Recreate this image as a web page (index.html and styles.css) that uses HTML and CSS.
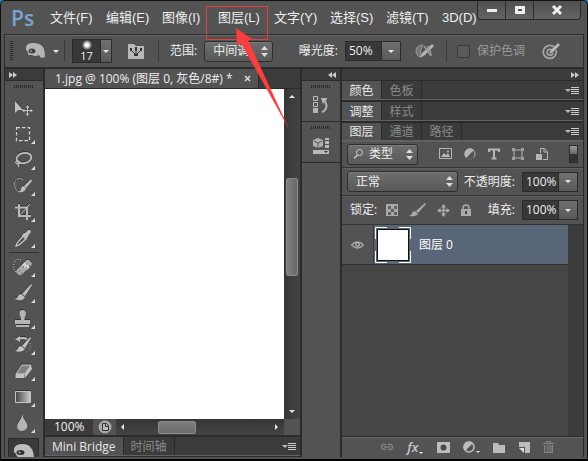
FILE: index.html
```html
<!DOCTYPE html>
<html lang="zh-CN">
  <head>
    <meta charset="utf-8" />
    <title>Ps</title>
    <link rel="stylesheet" href="styles.css" />
  </head>
  <body>
    <div class="app">
      <header class="menubar">
        <div class="logo">Ps</div>
        <nav class="menu">
          <button>文件(F)</button>
          <button>编辑(E)</button>
          <button>图像(I)</button>
          <button class="marked">图层(L)</button>
          <button>文字(Y)</button>
          <button>选择(S)</button>
          <button>滤镜(T)</button>
          <button>3D(D)</button>
        </nav>
        <div class="window-buttons">
          <button aria-label="最小化">
            <svg width="12" height="12"><path d="M1 5h10v3H1z" fill="#eee" /></svg>
          </button>
          <button aria-label="最大化">
            <svg width="12" height="12"><path d="M2.500 3.500h7v5h-7z" fill="none" stroke="#eee" stroke-width="3" /></svg>
          </button>
          <button class="close" aria-label="关闭">
            <svg width="12" height="12"><path d="M2 2l8 8M10 2l-8 8" stroke="#eee" stroke-width="3" /></svg>
          </button>
        </div>
      </header>

      <div class="options">
        <span class="grip-v"></span>
        <button class="tool-preset" aria-label="工具预设">
          <svg width="20" height="18" viewBox="0 0 20 18">
            <path d="M0 5Q1 1 7 1T16 4Q19 7 19 15L15 16L13 13Q9 15 6 13H3Q1 12 2 10L0 8z" fill="#b5b5b5" />
            <ellipse cx="6" cy="9" rx="3.500" ry="2.500" fill="#444" />
            <circle cx="5" cy="9" r="1" fill="#999" />
          </svg>
          <span class="caret"></span>
        </button>
        <span class="sep"></span>
        <button class="brush-size" aria-label="画笔大小">
          <span class="brush-preview"><i class="dot"></i>17</span>
          <span class="drop"><span class="caret"></span></span>
        </button>
        <button class="brush-panel" aria-label="画笔面板">
          <svg width="18" height="18" viewBox="0 0 18 18">
            <path d="M1 2h6l2 2h8v13H1z" fill="#b8b8b8" />
            <path d="M4 8l4 4M9 7v6M14 8l-4 4" stroke="#333" />
            <path d="M3 6h2v3H3zM8 5h2v4H8zM13 6h2v3h-2zM7 12h4v2H7z" fill="#333" />
          </svg>
        </button>
        <span class="sep"></span>
        <label class="opt-range">范围:
          <span class="select range"><select><option>中间调</option></select><svg class="updown" width="7" height="11"><path d="M0 4l3.500-4L7 4zM0 7h7l-3.500 4z" /></svg></span>
        </label>
        <label class="opt-exposure">曝光度:
          <span class="field"><input type="text" value="50%" /><span class="drop"><span class="caret"></span></span></span>
        </label>
        <button class="airbrush" aria-label="喷枪">
          <svg width="20" height="16" viewBox="0 0 20 16">
            <path d="M7 2Q1 3 1 8T6 14Q4 8 8 2z" fill="#777" stroke="#999" />
            <path d="M5 15l2-5L17 1l2 2-9 9z" fill="#b5b5b5" />
            <path d="M9 3l7 10M12 3q4 4 4 10" fill="none" stroke="#999" stroke-width="1.500" />
          </svg>
        </button>
        <span class="sep"></span>
        <label class="protect"><input type="checkbox" />保护色调</label>
        <button class="pressure" aria-label="压力">
          <svg width="19" height="18" viewBox="0 0 19 18">
            <path d="M12 5A6.500 6.500 0 1 0 14 8M10 8a3 3 0 1 0 1 3" fill="none" stroke="#a5a5a5" stroke-width="1.700" />
            <path d="M7 12l2-4 7-7 2 2-7 7z" fill="#bbb" />
          </svg>
        </button>
      </div>

      <main class="workspace">
        <aside class="tools">
          <div class="dock-head"><svg width="8" height="6"><path d="M0 0l4 3-4 3zM4 0l4 3-4 3z" /></svg></div>
          <span class="grip-h"></span>
          <button class="tool plain" aria-label="移动">
            <svg viewBox="0 0 20 20">
              <path d="M2 3v12l3-3 5 0z" fill="#c2c2c2" />
              <path d="M14.500 8v9M10 12.500h9" stroke="#c2c2c2" />
              <path d="M12.500 9.500l2-2.500 2 2.500zM12.500 15.500l2 2.500 2-2.500zM11.500 10.500L9 12.500l2.500 2zM17.500 10.500l2.500 2-2.500 2z" fill="#c2c2c2" />
            </svg>
          </button>
          <button class="tool" aria-label="矩形选框">
            <svg viewBox="0 0 20 20"><path d="M3.500 3.500h13v13h-13z" fill="none" stroke="#d0d0d0" stroke-width="1.300" stroke-dasharray="3.500 2" /></svg>
          </button>
          <button class="tool" aria-label="套索">
            <svg viewBox="0 0 20 20">
              <ellipse cx="11" cy="8" rx="7.500" ry="5" transform="rotate(-12 11 8)" fill="none" stroke="#bdbdbd" stroke-width="1.800" />
              <path d="M5 11q-3 0-2 2t3 0-1-2M4 13q3 1 1 4" fill="none" stroke="#bdbdbd" stroke-width="1.200" />
            </svg>
          </button>
          <button class="tool" aria-label="快速选择">
            <svg viewBox="0 0 20 20">
              <path d="M10 4Q6 1 3 4T3 13q2 4 6 2" fill="none" stroke="#ccc" stroke-dasharray="1.500 1" />
              <path d="M18 3l1 2-6 7-2-2zM10 10l3 2q-1 5-8 4 3-1 3-3 0-2 2-3z" fill="#bebebe" />
            </svg>
          </button>
          <button class="tool" aria-label="裁剪">
            <svg viewBox="0 0 20 20"><path d="M6 2v12h12M2 5.500h12V18" fill="none" stroke="#b8b8b8" stroke-width="2" /><path d="M6 14L17 2" stroke="#c5c5c5" /></svg>
          </button>
          <button class="tool" aria-label="吸管">
            <svg viewBox="0 0 20 20">
              <path d="M10 8l3 3-7 6-3 1 1-3z" fill="#555" stroke="#ccc" stroke-width="1.200" />
              <path d="M9 7l2-2 1 0 3-3q3-1 3 2l-3 4v1l-2 2z" fill="#bbb" />
            </svg>
          </button>
          <span class="tool-line"></span>
          <button class="tool" aria-label="修复画笔">
            <svg viewBox="0 0 20 20">
              <path d="M8 3Q4 1 2 4T1 12q1 3 3 3" fill="none" stroke="#ddd" stroke-dasharray="1 1.500" />
              <rect x="2" y="7" width="18" height="7" rx="3" transform="rotate(-44 11 10.500)" fill="#aaa" />
              <path d="M9 8l5 5 3-3-5-5z" fill="#d0d0d0" />
              <path d="M10 10h1M13 7h1M13 11h1M16 9h1M6 14h1M8 16h1M17 4h1" stroke="#555" />
            </svg>
          </button>
          <button class="tool" aria-label="画笔">
            <svg viewBox="0 0 20 20"><path d="M18 1l1 1-7 11-3-2zM8 11l4 3q-2 5-11 2 3 0 4-3 1-2 3-2z" fill="#bdbdbd" /></svg>
          </button>
          <button class="tool" aria-label="仿制图章">
            <svg viewBox="0 0 20 20"><path d="M8 9L6.500 5Q6 1 9.500 1T13 5l-1.500 4v2H17v4H2v-4h6zM3 16h13v2H3z" fill="#b5b5b5" /></svg>
          </button>
          <button class="tool" aria-label="历史记录画笔">
            <svg viewBox="0 0 20 20">
              <path d="M5 4q5-2 9 0" fill="none" stroke="#bbb" stroke-width="2" /><path d="M2 4l5-3v6z" fill="#bbb" />
              <path d="M17 2l1 1-6 10-3-2zM8 11l4 3q-3 4-10 2 3-1 3-3 1-2 3-2z" fill="#c2c2c2" />
              <path d="M17 8q2 6-4 9" fill="none" stroke="#bbb" stroke-dasharray="1 1.500" />
            </svg>
          </button>
          <button class="tool" aria-label="橡皮擦">
            <svg viewBox="0 0 20 20">
              <path d="M3 13L9 4h9l-6 9z" fill="#808080" stroke="#ccc" />
              <path d="M2.500 13h9v4h-9zM12 13l6-9 1 4-7 9z" fill="#c2c2c2" />
            </svg>
          </button>
          <button class="tool" aria-label="渐变">
            <svg viewBox="0 0 20 20">
              <defs><linearGradient id="grad"><stop offset="0" stop-color="#444" /><stop offset="1" stop-color="#ccc" /></linearGradient></defs>
              <path d="M2.500 4.500h15v11h-15z" fill="url(#grad)" stroke="#c2c2c2" />
            </svg>
          </button>
          <button class="tool" aria-label="模糊">
            <svg viewBox="0 0 20 20"><path d="M9.500 1q0 4 3.500 8 2 3 1 6-2 3-5 3-4 0-5-4 0-3 3-7 2-3 2.500-6z" fill="#b5b5b5" /></svg>
          </button>
          <button class="tool active" aria-label="减淡">
            <svg viewBox="0 0 20 20">
              <path d="M0 8Q1 3 8 3T17 7Q20 10 20 18L16 19L14 16Q10 18 7 16H4Q2 15 2 13L0 11z" fill="#bdbdbd" />
              <ellipse cx="6.500" cy="11.500" rx="4" ry="2.500" fill="#2e2e2e" />
              <circle cx="5.500" cy="11.500" r="1" fill="#bbb" />
            </svg>
          </button>
        </aside>

        <section class="document">
          <div class="doc-tabs">
            <div class="doc-tab">
              <span>1.jpg @ 100% (图层 0, 灰色/8#) *</span>
              <button aria-label="关闭文档"><svg width="7" height="7"><path d="M1 1l5 5M6 1L1 6" stroke="#ddd" stroke-width="1.500" /></svg></button>
            </div>
          </div>
          <div class="view">
            <div class="canvas"></div>
            <div class="scroll-v">
              <span class="caret up"></span>
              <span class="thumb"></span>
              <span class="caret"></span>
            </div>
          </div>
          <div class="status">
            <input type="text" value="100%" aria-label="缩放" />
            <button class="doc-info" aria-label="文档信息">
              <svg width="14" height="14"><circle cx="7" cy="7" r="6.500" fill="#aaa" /><path d="M4.500 3.500h4l2 2v5h-6zM7.500 3.500v3h3" fill="#bbb" stroke="#333" /></svg>
            </button>
            <div class="scroll-h">
              <span class="caret left"></span>
              <span class="thumb"></span>
              <span class="caret right"></span>
            </div>
          </div>
          <div class="tabs bottom-tabs">
            <button class="on">Mini Bridge</button>
            <button>时间轴</button>
            <span class="panel-menu"><i class="caret"></i><i class="lines"></i></span>
          </div>
        </section>

        <aside class="strip">
          <div class="dock-head right"><svg width="8" height="6"><path d="M4 0L0 3l4 3zM8 0L4 3l4 3z" /></svg></div>
          <div class="strip-group">
            <span class="grip-h"></span>
            <button aria-label="历史记录">
              <svg width="16" height="18" viewBox="0 0 16 18">
                <path d="M.5.500h4v4h-4zM.5 6.500h4v4h-4z" fill="none" stroke="#bbb" /><path d="M0 12h5v5H0z" fill="#b5b5b5" />
                <path d="M9 16q7-3 3-11" fill="none" stroke="#b5b5b5" stroke-width="2" /><path d="M8 2h6v1l-4 5z" fill="#b5b5b5" />
              </svg>
            </button>
          </div>
          <div class="strip-group">
            <span class="grip-h"></span>
            <button aria-label="属性">
              <svg width="16" height="18" viewBox="0 0 16 18">
                <path d="M0 3l5-2 5 2v6l-5 2-5-2z" fill="#b0b0b0" /><path d="M1 4l4 2 4-2M5 6v5" fill="none" stroke="#555" />
                <path d="M12 1h4v2h-4zM12 4h4v3h-4zM12 8h4v3h-4zM0 13h16v4H0z" fill="#b8b8b8" /><path d="M11 14h4l-2 2z" fill="#333" />
              </svg>
            </button>
          </div>
        </aside>

        <aside class="panels">
          <div class="dock-head right"><svg width="8" height="6"><path d="M0 0l4 3-4 3zM4 0l4 3-4 3z" /></svg></div>
          <div class="tabs">
            <button class="on">颜色</button><button>色板</button>
            <span class="panel-menu"><i class="caret"></i><i class="lines"></i></span>
          </div>
          <div class="tabs">
            <button class="on">调整</button><button>样式</button>
            <span class="panel-menu"><i class="caret"></i><i class="lines"></i></span>
          </div>
          <div class="layers">
            <div class="tabs">
              <button class="on">图层</button><button>通道</button><button>路径</button>
              <span class="panel-menu"><i class="caret"></i><i class="lines"></i></span>
            </div>
            <div class="row filter">
              <span class="select kind">
                <svg class="search" width="9" height="10"><circle cx="5.500" cy="3.500" r="3" fill="none" stroke="#ccc" /><path d="M3.500 6L0 9.500" stroke="#ccc" stroke-width="1.500" /></svg>
                <select aria-label="滤镜类型"><option>类型</option></select>
                <svg class="updown" width="7" height="11"><path d="M0 4l3.500-4L7 4zM0 7h7l-3.500 4z" /></svg>
              </span>
              <div class="filter-icons">
                <button aria-label="像素图层"><svg width="13" height="12"><path d="M.5.500h12v10H.5z" fill="none" stroke="#b5b5b5" /><path d="M2 9l3-4 2 2 2-2 2 4z" fill="#b5b5b5" /><circle cx="9" cy="3.500" r="1" fill="#b5b5b5" /></svg></button>
                <button aria-label="调整图层"><svg width="12" height="12"><circle cx="6" cy="6" r="5" fill="none" stroke="#b5b5b5" /><path d="M2 10A5.500 5.500 0 0 1 2 2L10 10A5.500 5.500 0 0 1 2 10z" fill="#555" /><path d="M2 10A5.500 5.500 0 0 1 10 2z" fill="#b5b5b5" /></svg></button>
                <button aria-label="文字图层"><svg width="12" height="12"><path d="M1 4V1.500h10V4M6 1v9M3.500 10.500h5" fill="none" stroke="#b5b5b5" stroke-width="2" /></svg></button>
                <button aria-label="形状图层"><svg width="12" height="12"><path d="M2 2h8v8H2z" fill="none" stroke="#b5b5b5" /><path d="M.5.500h2v2h-2zM9.500.500h2v2h-2zM.5 9.500h2v2h-2zM9.500 9.500h2v2h-2z" fill="#535353" stroke="#b5b5b5" /></svg></button>
                <button aria-label="智能对象"><svg width="12" height="13"><path d="M4.500 5V.5h4l3 3v8H7M8 1v3h3" fill="none" stroke="#b5b5b5" /><path d="M0 6h6v6H0z" fill="#b5b5b5" /></svg></button>
              </div>
              <button class="switch" aria-label="滤镜开关"></button>
            </div>
            <div class="row">
              <span class="select blend"><select aria-label="混合模式"><option>正常</option></select><svg class="updown" width="7" height="11"><path d="M0 4l3.500-4L7 4zM0 7h7l-3.500 4z" /></svg></span>
              <label class="value">不透明度:
                <span class="field"><input type="text" value="100%" /><span class="drop"><span class="caret"></span></span></span>
              </label>
            </div>
            <div class="row lock">
              <span>锁定:</span>
              <div class="lock-icons">
                <button aria-label="锁定透明像素"><svg width="12" height="12"><path d="M0 0h12v12H0z" fill="#aaa" /><path d="M2 2h3v3H2zM8 2h3v3H8zM5 5h3v3H5zM2 8h3v3H2zM8 8h3v3H8z" fill="#606060" /></svg></button>
                <button aria-label="锁定图像像素"><svg width="17" height="14"><path d="M16 0l1 1-8 9-2-2zM6 8l3 3q-2 3-9 2 3-1 3-3 1-2 3-2z" fill="#aaa" /></svg></button>
                <button aria-label="锁定位置"><svg width="13" height="13"><path d="M6.500 1v11M1 6.500h11" stroke="#aaa" stroke-width="1.500" /><path d="M4 3.500L6.500 0 9 3.500zM4 9.500L6.500 13 9 9.500zM3.500 4L0 6.500 3.500 9zM9.500 4L13 6.500 9.500 9z" fill="#aaa" /></svg></button>
                <button aria-label="锁定全部"><svg width="10" height="13"><path d="M2 6V4q0-3 3-3t3 3v2" fill="none" stroke="#aaa" stroke-width="1.500" /><path d="M0 5h10v7H0z" fill="#aaa" /><path d="M4 7h2v3H4z" fill="#444" /></svg></button>
              </div>
              <label class="value">填充:
                <span class="field"><input type="text" value="100%" /><span class="drop"><span class="caret"></span></span></span>
              </label>
            </div>
            <div class="layer-list">
              <div class="layer">
                <button class="eye" aria-label="可见性">
                  <svg width="13" height="10"><path d="M.5 5Q6.500-1 12.500 5Q6.500 11 .5 5z" fill="none" stroke="#aaa" stroke-width="1.300" /><circle cx="6.500" cy="4.500" r="2.500" fill="#aaa" /><circle cx="6.500" cy="4.500" r="1" fill="#444" /></svg>
                </button>
                <div class="layer-body">
                  <svg class="thumbnail" width="36" height="36"><path d="M.5 12V.5H12M24 .5h11.500V12M35.500 24v11.500H24M12 35.500H.5V24" fill="none" stroke="#fff" /><path d="M2.500 2.500h31v31h-31z" fill="#fff" stroke="#111" /></svg>
                  <span>图层 0</span>
                </div>
              </div>
            </div>
            <div class="layer-footer">
              <button aria-label="链接图层"><svg width="14" height="8"><path d="M6 1.500H4a2.500 2.500 0 0 0 0 5h2M8 1.500h2a2.500 2.500 0 0 1 0 5H8M4 4h6" fill="none" stroke="#808080" stroke-width="1.500" /></svg></button>
              <button class="fx" aria-label="图层样式"><em>fx</em><i class="caret"></i></button>
              <button aria-label="添加蒙版"><svg width="13" height="11"><path d="M0 0h13v11H0z" fill="#bdbdbd" /><circle cx="6.500" cy="5.500" r="3" fill="#4a4a4a" /></svg></button>
              <button class="fx" aria-label="新建调整图层"><svg width="12" height="12"><circle cx="6" cy="6" r="5" fill="none" stroke="#bdbdbd" stroke-width="1.500" /><path d="M2 10A5.500 5.500 0 0 1 10 2z" fill="#bdbdbd" /></svg><i class="caret"></i></button>
              <button aria-label="新建组"><svg width="12" height="11"><path d="M0 1h5l1 2h6v8H0z" fill="#bdbdbd" /></svg></button>
              <button aria-label="新建图层"><svg width="11" height="11"><path d="M0 0h11v11H6V5H0z" fill="#bdbdbd" /><path d="M0 6h5v5z" fill="#ddd" /></svg></button>
              <button aria-label="删除图层"><svg width="11" height="12"><path d="M0 2.500h11M3.500 2V.5h4V2" fill="none" stroke="#858585" /><path d="M1.500 4v7.500h8V4M4 4v7M6 4v7M8 4v7" fill="none" stroke="#858585" /></svg></button>
            </div>
          </div>
        </aside>
      </main>

      <svg class="pointer" width="56" height="104" aria-hidden="true"><path d="M1 0l16 11-4 1 42 91-49-88-4 2z" fill="#ff3b3b" /></svg>
    </div>
  </body>
</html>
```
FILE: styles.css
```css
* {
  box-sizing: border-box;
}
body {
  margin: 0;
  background: linear-gradient(#1b82d6 6px, #000 6px);
  font-family: "Open Sans", "Noto Sans CJK SC", sans-serif;
  font-size: 12px;
  line-height: 16px;
  color: #eee;
}
button,
input,
select {
  margin: 0;
  padding: 0;
  border: none;
  background: none;
  font: inherit;
  color: inherit;
}
svg {
  display: block;
  flex: none;
}
.app {
  position: relative;
  display: flex;
  flex-direction: column;
  height: 100vh;
  padding: 0 3px 2px;
  border: 1px solid #111;
  border-bottom: 2px solid #000;
  border-radius: 5px 5px 0 0;
  background: #535353;
  overflow: hidden;
}

/* menu bar */
.menubar {
  position: relative;
  display: flex;
  height: 33px;
  flex: none;
  align-items: center;
}
.logo {
  width: 46px;
  padding-left: 7px;
  font-family: "Open Sans", sans-serif;
  font-size: 21px;
  line-height: 28px;
  font-weight: 600;
  color: #79a3d3;
}
.menu {
  display: grid;
  grid-auto-flow: column;
  grid-auto-columns: 56px;
}
.menu button {
  text-align: left;
  font-size: 13px;
  font-family: "Liberation Sans", "Noto Sans CJK SC", sans-serif;
  white-space: nowrap;
}
.menu .marked {
  position: relative;
}
.menu .marked::before {
  content: "";
  position: absolute;
  left: -12px;
  top: -4px;
  width: 60px;
  height: 32px;
  border: 1px solid #e83c3c;
}
.window-buttons {
  position: absolute;
  right: 3px;
  top: 0;
  display: flex;
  border: 1px solid #2a2a2a;
  border-top: none;
  border-radius: 0 0 4px 4px;
  background: linear-gradient(#505050, #636363);
}
.window-buttons button {
  display: flex;
  width: 28px;
  height: 18px;
  align-items: center;
  justify-content: center;
  border-right: 1px solid #2f2f2f;
}
.window-buttons .close {
  width: 46px;
  border-right: none;
}

/* options bar */
.options {
  display: flex;
  height: 33px;
  flex: none;
  align-items: center;
  padding: 0 5px;
  border: 1px solid #2e2e2e;
  border-bottom: none;
  box-shadow: inset 0 1px #636363;
  white-space: nowrap;
}
.grip-v {
  width: 3px;
  height: 20px;
  background: repeating-linear-gradient(#2e2e2e 0 1px, #535353 1px 2px);
}
.tool-preset {
  display: flex;
  align-items: center;
  gap: 7px;
  margin: 0 5px 0 13px;
}
.sep {
  width: 1px;
  height: 22px;
  background: #3b3b3b;
}
.caret {
  width: 0;
  height: 0;
  border: 3px solid transparent;
  border-top: 3px solid #e8e8e8;
  border-bottom: none;
}
.caret.up {
  border-top: none;
  border-bottom: 3px solid #e8e8e8;
}
.caret.left {
  border: 3px solid transparent;
  border-left: none;
  border-right-color: #e8e8e8;
}
.caret.right {
  border: 3px solid transparent;
  border-right: none;
  border-left-color: #e8e8e8;
}
.brush-size {
  display: flex;
  height: 24px;
  margin-left: 7px;
  border: 1px solid #2b2b2b;
}
.brush-preview {
  display: flex;
  flex-direction: column;
  width: 27px;
  align-items: center;
  background: #383838;
  font-size: 11px;
  line-height: 12px;
}
.dot {
  width: 10px;
  height: 10px;
  border-radius: 50%;
  background: radial-gradient(#fff 20%, #383838 75%);
}
.drop {
  display: flex;
  width: 19px;
  flex: none;
  align-items: center;
  justify-content: center;
  border-left: 1px solid #2b2b2b;
  background: linear-gradient(#707070, #595959);
}
.brush-size .drop {
  width: 11px;
}
.brush-panel {
  margin: 0 13px 0 15px;
}
.options label,
.value {
  display: flex;
  align-items: center;
  gap: 7px;
}
.opt-range {
  margin-left: 11px;
}
.opt-exposure {
  margin-left: auto;
}
.select {
  position: relative;
  display: inline-flex;
  height: 21px;
  align-items: center;
  border: 1px solid #2e2e2e;
  border-radius: 3px;
  background: linear-gradient(#6e6e6e, #585858);
  box-shadow: inset 0 1px #7c7c7c;
}
.select select {
  width: 100%;
  height: 100%;
  padding-left: 8px;
  appearance: none;
  outline: none;
}
.updown {
  position: absolute;
  right: 4px;
  fill: #ddd;
  pointer-events: none;
}
.range {
  width: 69px;
}
.kind {
  width: 71px;
}
.kind select {
  padding-left: 21px;
}
.search {
  position: absolute;
  left: 6px;
}
.blend {
  width: 111px;
}
.field {
  display: flex;
  height: 20px;
  border: 1px solid #2b2b2b;
  background: #383838;
}
.field input {
  width: 35px;
  padding-left: 3px;
  outline: none;
}
.airbrush {
  margin: 0 11px 0 14px;
}
.protect {
  margin-left: 10px;
  color: #999;
}
.protect input {
  width: 13px;
  height: 13px;
  appearance: none;
  border: 1px solid #3a3a3a;
  border-radius: 2px;
  background: #5a5a5a;
}
.pressure {
  margin: 0 17px;
}

/* workspace */
.workspace {
  display: grid;
  grid-template-columns: 38px 1fr 38px 241px;
  gap: 2px;
  flex: 1;
  min-height: 0;
  padding: 2px 1px 0;
  background: #2b2b2b;
}
.workspace > * {
  display: flex;
  flex-direction: column;
  min-width: 0;
  min-height: 0;
}
.dock-head {
  display: flex;
  height: 12px;
  flex: none;
  align-items: center;
  padding: 0 4px;
  border-bottom: 1px solid #2b2b2b;
  background: #3b3b3b;
}
.dock-head.right {
  justify-content: flex-end;
}
.dock-head svg {
  fill: #ccc;
}
.grip-h {
  display: block;
  width: 20px;
  height: 3px;
  flex: none;
  margin: 4px auto 0;
  background: repeating-linear-gradient(90deg, #2e2e2e 0 1px, #535353 1px 2px);
}

/* tools */
.tools {
  overflow: hidden;
  background: #535353;
}
.tools .grip-h {
  margin-bottom: 7px;
}
.tool {
  position: relative;
  display: flex;
  height: 26px;
  flex: none;
  align-items: center;
  padding-left: 8px;
}
.tool svg {
  width: 20px;
  height: 20px;
  filter: drop-shadow(0 -1px #333);
}
.tool::after {
  content: "";
  position: absolute;
  right: 8px;
  bottom: 3px;
  border: 2px solid #ddd;
  border-top-color: transparent;
  border-left-color: transparent;
}
.tool.plain::after,
.tool.active::after {
  display: none;
}
.tool-line {
  height: 1px;
  flex: none;
  margin: 1px 4px;
  background: #333;
}
.tool.active {
  margin: 2px 4px 0 3px;
  padding-left: 5px;
  border: 1px solid #2b2b2b;
  background: #3a3a3a;
}

/* document */
.doc-tabs {
  display: flex;
  height: 20px;
  flex: none;
  border-bottom: 1px solid #2b2b2b;
  background: #3b3b3b;
}
.doc-tab {
  display: flex;
  width: 214px;
  align-items: center;
  justify-content: space-between;
  padding: 0 7px 0 10px;
  border-right: 1px solid #2b2b2b;
  background: #535353;
  white-space: nowrap;
}
.view {
  display: flex;
  flex: 1;
  min-height: 0;
}
.canvas {
  flex: 1;
  background: #fff;
}
.scroll-v {
  display: flex;
  flex-direction: column;
  width: 16px;
  align-items: center;
  justify-content: space-between;
  padding: 6px 1px;
  background: linear-gradient(90deg, #363636, #444);
}
.thumb {
  border: 1px solid #8a8a8a;
  border-radius: 2px;
  background: linear-gradient(#7d7d7d, #6c6c6c);
}
.scroll-v .thumb {
  width: 12px;
  height: 98px;
  margin-bottom: 54px;
  background: linear-gradient(90deg, #808080, #686868);
}
.status {
  display: flex;
  height: 16px;
  flex: none;
  padding-right: 16px;
  background: #535353;
}
.status input {
  width: 48px;
  padding-left: 9px;
  background: #3b3b3b;
}
.doc-info {
  display: flex;
  width: 23px;
  align-items: center;
  justify-content: center;
}
.scroll-h {
  display: flex;
  flex: 1;
  align-items: center;
  justify-content: space-between;
  padding: 0 6px 0 5px;
  background: linear-gradient(#363636, #444);
}
.scroll-h .thumb {
  width: 38px;
  height: 13px;
  margin-right: 46px;
}
.tabs {
  display: flex;
  height: 19px;
  flex: none;
  border-bottom: 1px solid #626262;
  background: #3b3b3b;
  color: #8a8a8a;
}
.tabs button {
  padding: 0 7px;
  border-right: 1px solid #2b2b2b;
  line-height: 17px;
}
.tabs .on {
  background: #535353;
  color: #e8e8e8;
}
.bottom-tabs {
  margin: 2px 0 1px;
}
.panel-menu {
  display: flex;
  align-items: center;
  margin-left: auto;
  padding-right: 4px;
}
.panel-menu .caret {
  border-top-color: #bbb;
}
.lines {
  width: 8px;
  height: 7px;
  background: repeating-linear-gradient(#ccc 0 1px, #3b3b3b 1px 2px);
}

/* icon strip */
.strip {
  background: #535353;
}
.strip-group {
  height: 41px;
  border-bottom: 1px solid #2b2b2b;
}
.strip-group button {
  display: block;
  margin: 8px auto 0;
}

/* panels */
.panels > .tabs {
  margin-bottom: 2px;
}
.layers {
  display: flex;
  flex-direction: column;
  flex: 1;
  background: #535353;
}
.layers .tabs {
  height: 18px;
}
.panels .tabs button {
  width: 40px;
}
.row {
  display: flex;
  height: 28px;
  flex: none;
  align-items: center;
  justify-content: space-between;
  padding: 0 5px;
  border-bottom: 1px solid #333;
  box-shadow: inset 0 1px #606060;
}
.row.filter {
  height: 27px;
}
.filter-icons,
.lock-icons {
  display: flex;
  align-items: center;
}
.filter-icons {
  gap: 12px;
}
.switch {
  width: 9px;
  height: 18px;
  border: 1px solid #2b2b2b;
  background: linear-gradient(#999, #666 50%, #333 50%);
}
.row.lock {
  height: 29px;
  padding-left: 8px;
}
.lock-icons {
  gap: 11px;
  margin-right: auto;
  padding-left: 9px;
}
.layer-list {
  flex: 1;
  border-bottom: 1px solid #2e2e2e;
  background: linear-gradient(90deg, #464646, #464646) no-repeat 0 0 / calc(100% - 15px) 100%, #3c3c3c;
}
.layer {
  display: flex;
  height: 40px;
  margin-right: 15px;
  border-bottom: 1px solid #333;
}
.eye {
  display: flex;
  width: 32px;
  align-items: center;
  justify-content: center;
  border-right: 1px solid #3b3b3b;
  background: #535353;
}
.layer-body {
  display: flex;
  flex: 1;
  align-items: center;
  gap: 8px;
  padding-left: 1px;
  background: #596678;
  color: #fff;
}
.layer-footer {
  display: flex;
  height: 20px;
  flex: none;
  align-items: center;
  justify-content: space-between;
  padding: 0 29px 0 38px;
  box-shadow: inset 0 1px #666;
}
.fx {
  display: flex;
  align-items: flex-end;
  gap: 1px;
}
.fx em {
  font-family: "Open Sans", sans-serif;
  font-size: 13px;
  font-weight: 600;
  line-height: 14px;
  color: #c5c5c5;
}
.fx .caret {
  border-width: 2px 2px 0;
}

/* red arrow over the window */
.pointer {
  position: absolute;
  left: 234px;
  top: 27px;
  pointer-events: none;
}
```
